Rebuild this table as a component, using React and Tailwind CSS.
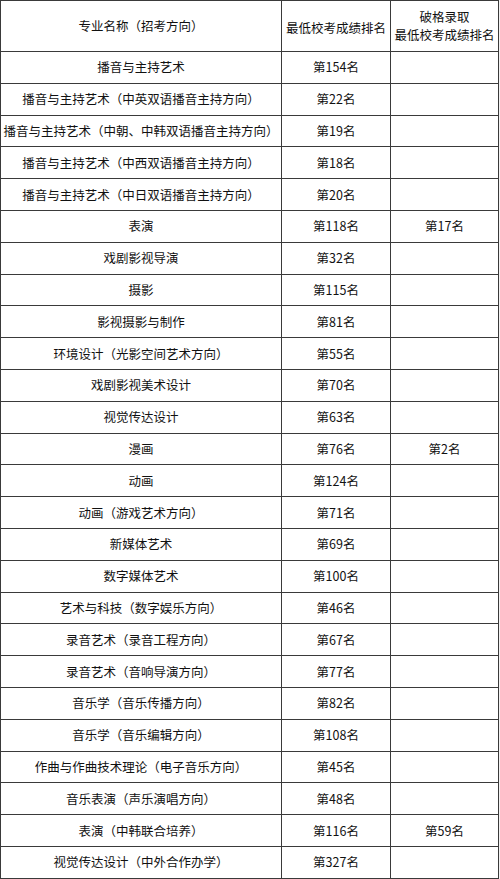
import React from "react"

const rows = [
  ["播音与主持艺术", "第154名", ""],
  ["播音与主持艺术（中英双语播音主持方向）", "第22名", ""],
  ["播音与主持艺术（中朝、中韩双语播音主持方向）", "第19名", ""],
  ["播音与主持艺术（中西双语播音主持方向）", "第18名", ""],
  ["播音与主持艺术（中日双语播音主持方向）", "第20名", ""],
  ["表演", "第118名", "第17名"],
  ["戏剧影视导演", "第32名", ""],
  ["摄影", "第115名", ""],
  ["影视摄影与制作", "第81名", ""],
  ["环境设计（光影空间艺术方向）", "第55名", ""],
  ["戏剧影视美术设计", "第70名", ""],
  ["视觉传达设计", "第63名", ""],
  ["漫画", "第76名", "第2名"],
  ["动画", "第124名", ""],
  ["动画（游戏艺术方向）", "第71名", ""],
  ["新媒体艺术", "第69名", ""],
  ["数字媒体艺术", "第100名", ""],
  ["艺术与科技（数字娱乐方向）", "第46名", ""],
  ["录音艺术（录音工程方向）", "第67名", ""],
  ["录音艺术（音响导演方向）", "第77名", ""],
  ["音乐学（音乐传播方向）", "第82名", ""],
  ["音乐学（音乐编辑方向）", "第108名", ""],
  ["作曲与作曲技术理论（电子音乐方向）", "第45名", ""],
  ["音乐表演（声乐演唱方向）", "第48名", ""],
  ["表演（中韩联合培养）", "第116名", "第59名"],
  ["视觉传达设计（中外合作办学）", "第327名", ""],
]

export default function App() {
  return (
    <div className="w-[500px] h-[879px] bg-[#f2f2f2] overflow-hidden">
      <table
        className="w-[498px] table-fixed border-collapse bg-white text-[#111] text-[12.5px] leading-[18px] text-center"
        style={{ fontFamily: '"Noto Sans CJK SC", "Noto Sans", sans-serif' }}
      >
        <colgroup>
          <col className="w-[281px]" />
          <col className="w-[109px]" />
          <col className="w-[108px]" />
        </colgroup>
        <thead>
          <tr className="h-[51px]">
            <th className="border border-[#3a3a3a] p-0 font-normal">专业名称（招考方向）</th>
            <th className="border border-[#3a3a3a] p-0 pt-[3px] font-normal">最低校考成绩排名</th>
            <th className="border border-[#3a3a3a] p-0 font-normal">
              破格录取
              <br />
              最低校考成绩排名
            </th>
          </tr>
        </thead>
        <tbody>
          {rows.map(([name, rank, special]) => (
            <tr key={name} className="h-[31.8px]">
              <td className="border border-[#3a3a3a] p-0 whitespace-nowrap">{name}</td>
              <td className="border border-[#3a3a3a] p-0">{rank}</td>
              <td className="border border-[#3a3a3a] p-0">{special}</td>
            </tr>
          ))}
        </tbody>
      </table>
    </div>
  )
}
